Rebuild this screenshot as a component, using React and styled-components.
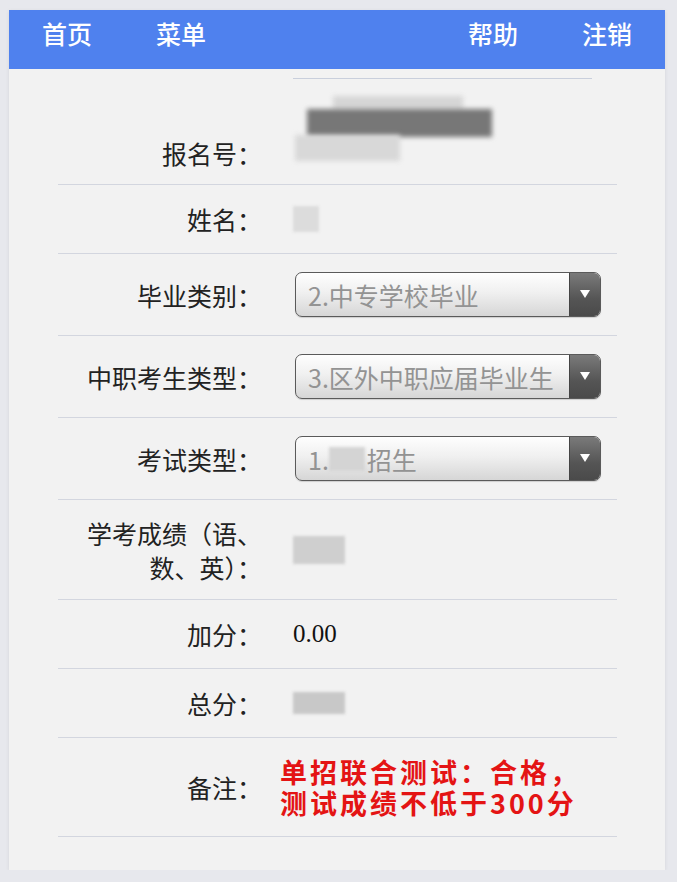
import React from "react";
import styled, { createGlobalStyle } from "styled-components";

const GlobalStyle = createGlobalStyle`
  body {
    margin: 0;
    background: #e7e8ed;
    font-family: "Noto Sans CJK SC", "Noto Sans", sans-serif;
  }
`;

const Card = styled.div`
  margin: 10px 0 0 9px;
  width: 656px;
  height: 860px;
  background: #f2f2f2;
  box-shadow: 0 1px 4px rgba(0, 0, 0, 0.08);
  box-sizing: border-box;
`;

const TopBar = styled.div`
  height: 59px;
  background: #4f81ee;
  display: flex;
  align-items: center;
  justify-content: space-between;
  padding: 0 33px 14px 33px;
  box-sizing: border-box;
`;

const NavGroup = styled.div`
  display: flex;
  gap: 64px;
`;

const NavLink = styled.span`
  color: #fff;
  font-size: 25px;
  font-weight: 500;
  line-height: 30px;
`;

const Body = styled.div`
  padding: 9px 48px 0 49px;
`;

const TopRule = styled.div`
  margin-left: 235px;
  width: 299px;
  height: 1px;
  background: #c9cfdc;
`;

const Row = styled.div`
  display: grid;
  grid-template-columns: 204px 1fr;
  column-gap: 31px;
  align-items: ${(p) => p.$align || "center"};
  padding: ${(p) => p.$pad || "17px"} 0;
  border-bottom: 1px solid #d3d6df;
`;

const Label = styled.div`
  text-align: right;
  font-size: 25px;
  line-height: 34px;
  color: #222;
  padding-left: 25px;
`;

const Value = styled.div`
  font-family: "Liberation Serif", "Times New Roman", serif;
  font-size: 25px;
  line-height: 34px;
  color: #111;
  display: flex;
  align-items: center;
`;

const Blur = styled.div`
  width: ${(p) => p.$w}px;
  height: ${(p) => p.$h}px;
  background: ${(p) => p.$c};
  filter: blur(${(p) => p.$b || 1.5}px);
  margin: ${(p) => p.$m || "0"};
`;

const Mosaic = styled.div`
  position: relative;
  width: 210px;
  height: 77px;
  margin-left: 2px;
`;

const MosaicBar = styled.div`
  position: absolute;
  left: ${(p) => p.$x}px;
  top: ${(p) => p.$y}px;
  width: ${(p) => p.$w}px;
  height: ${(p) => p.$h}px;
  background: ${(p) => p.$c};
  filter: blur(2.5px);
`;

const Select = styled.div`
  width: 306px;
  height: 45px;
  margin-left: 2px;
  box-sizing: border-box;
  border: 1.5px solid #5a5a5a;
  border-radius: 7px;
  background: linear-gradient(#fefefe, #f0f0f0 45%, #d6d6d6);
  display: flex;
  overflow: hidden;
  box-shadow: 0 1px 1px rgba(0, 0, 0, 0.15);
`;

const SelectText = styled.div`
  flex: 1;
  display: flex;
  align-items: center;
  padding-left: 12px;
  font-family: "Noto Sans CJK SC", "Liberation Sans", sans-serif;
  font-size: 25px;
  color: #939393;
  white-space: nowrap;
  overflow: hidden;
`;

const Arrow = styled.div`
  width: 30px;
  display: flex;
  align-items: center;
  justify-content: center;
  background: linear-gradient(#7a7a7a, #555 60%, #4a4a4a);
  border-left: 1px solid #444;
`;

const Remark = styled.div`
  color: #e41414;
  font-family: "Noto Sans CJK SC", sans-serif;
  font-weight: 700;
  font-size: 27px;
  letter-spacing: 3px;
  line-height: 31px;
  margin-left: -13px;
`;

const Caret = () => (
  <svg width="10" height="9" viewBox="0 0 10 9">
    <path d="M0 0 L10 0 L5 8 Z" fill="#fff" />
  </svg>
);

const Dropdown = ({ children }) => (
  <Select>
    <SelectText>{children}</SelectText>
    <Arrow>
      <Caret />
    </Arrow>
  </Select>
);

const App = () => (
  <>
    <GlobalStyle />
    <Card>
      <TopBar>
        <NavGroup>
          <NavLink>首页</NavLink>
          <NavLink>菜单</NavLink>
        </NavGroup>
        <NavGroup>
          <NavLink>帮助</NavLink>
          <NavLink>注销</NavLink>
        </NavGroup>
      </TopBar>
      <Body>
        <TopRule />
        <Row $align="end" $pad="14px">
          <Label>报名号：</Label>
          <Value>
            <Mosaic>
              <MosaicBar $x={38} $y={3} $w={130} $h={14} $c="#d6d6d6" />
              <MosaicBar $x={12} $y={16} $w={185} $h={28} $c="#777" />
              <MosaicBar $x={0} $y={42} $w={105} $h={26} $c="#d8d8d8" />
            </Mosaic>
          </Value>
        </Row>
        <Row>
          <Label>姓名：</Label>
          <Value>
            <Blur $w={26} $h={26} $c="#dcdcdc" />
          </Value>
        </Row>
        <Row $pad="18px">
          <Label>毕业类别：</Label>
          <Value>
            <Dropdown>2.中专学校毕业</Dropdown>
          </Value>
        </Row>
        <Row $pad="18px">
          <Label>中职考生类型：</Label>
          <Value>
            <Dropdown>3.区外中职应届毕业生</Dropdown>
          </Value>
        </Row>
        <Row $pad="18px">
          <Label>考试类型：</Label>
          <Value>
            <Dropdown>
              1.
              <Blur $w={36} $h={24} $c="#d4d4d4" $m="0 2px 0 0" />
              招生
            </Dropdown>
          </Value>
        </Row>
        <Row $pad="15.5px">
          <Label>学考成绩（语、数、英）：</Label>
          <Value>
            <Blur $w={52} $h={28} $c="#cfcfcf" />
          </Value>
        </Row>
        <Row>
          <Label>加分：</Label>
          <Value>0.00</Value>
        </Row>
        <Row>
          <Label>总分：</Label>
          <Value>
            <Blur $w={52} $h={22} $c="#c8c8c8" />
          </Value>
        </Row>
        <Row $pad="18px">
          <Label>备注：</Label>
          <Remark>
            单招联合测试：合格，
            <br />
            测试成绩不低于300分
          </Remark>
        </Row>
      </Body>
    </Card>
  </>
);

export default App;
